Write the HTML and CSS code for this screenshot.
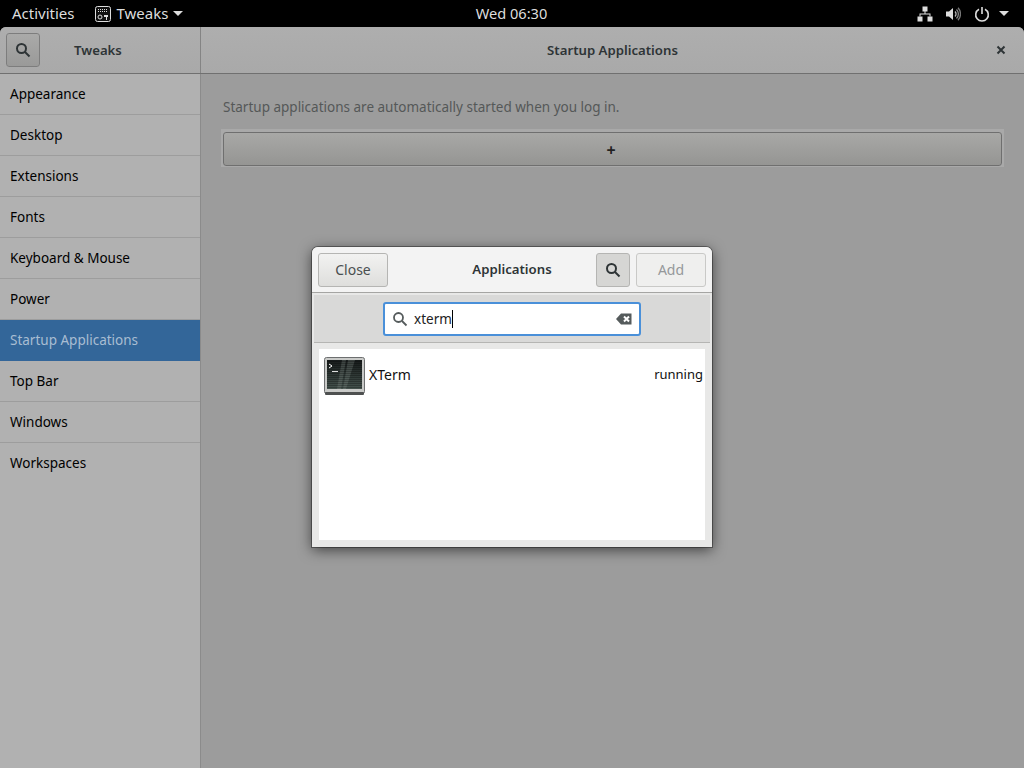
FILE: index.html
```html
<!DOCTYPE html>
<html lang="en">

<head>
    <meta charset="UTF-8">
    <title>Tweaks</title>
    <link rel="stylesheet" href="styles.css">
</head>

<body>
    <div class="topbar">
        <div class="topLeft">
            <span class="barText">Activities</span>
            <span class="appMenu">
                <svg width="16" height="16" viewBox="0 0 16 16">
                    <rect x="0.5" y="0.5" width="15" height="15" rx="2" fill="#111" stroke="#ddd"/>
                    <path d="M3 3h1v1H3zM5 3h1v1H5zM7 3h1v1H7zM9 3h1v1H9zM11 3h1v1h-1zM3 5h1v1H3zM5 5h1v1H5zM7 5h1v1H7zM9 5h1v1H9zM11 5h1v1h-1z" fill="#ddd"/>
                    <circle cx="5" cy="11" r="2" fill="none" stroke="#ddd"/>
                    <path d="M9 9h4v2h-1v3h-1v-3H9z" fill="#ddd"/>
                </svg>
                <span class="barText">Tweaks</span>
                <span class="arrow"></span>
            </span>
        </div>
        <div class="clock">Wed 06:30</div>
        <div class="tray">
            <svg width="16" height="16" viewBox="0 0 16 16" fill="#ddd">
                <rect x="5.500" y="0.500" width="5" height="5"/>
                <rect x="0.500" y="10.500" width="5" height="5"/>
                <rect x="10.500" y="10.500" width="5" height="5"/>
                <path d="M7.500 5h1v2.500H13.500v3h-1v-2H3.500v2h-1v-3H7.500z"/>
            </svg>
            <svg width="16" height="16" viewBox="0 0 16 16" fill="none">
                <path d="M1 5.500h3L8 2v12L4 10.500H1z" fill="#ddd"/>
                <path d="M10 5.500a3.500 3.500 0 0 1 0 5" stroke="#bbb" stroke-width="1.300"/>
                <path d="M11.500 3.500a6.300 6.300 0 0 1 0 9" stroke="#888" stroke-width="1.300"/>
                <path d="M13 1.800a9 9 0 0 1 0 12.400" stroke="#777" stroke-width="1.300"/>
            </svg>
            <svg class="power" width="16" height="16" viewBox="0 0 16 16" fill="none" stroke="#ddd" stroke-width="1.600">
                <path d="M5 3.200a6.300 6.300 0 1 0 6 0"/>
                <path d="M8 1v7"/>
            </svg>
            <span class="arrow"></span>
        </div>
    </div>

    <div class="window">
        <div class="titlebar">
            <div class="titleLeft">
                <button class="iconBtn">
                    <svg width="16" height="16" viewBox="0 0 16 16" fill="none" stroke="#2e3436" stroke-width="2">
                        <circle cx="6.500" cy="6.500" r="4.500"/>
                        <path d="M10 10l4.500 4.500"/>
                    </svg>
                </button>
                <span class="titleText">Tweaks</span>
            </div>
            <div class="titleRight">
                <span class="titleText">Startup Applications</span>
                <svg class="closeIcon" width="10" height="10" viewBox="0 0 10 10" stroke="#2e3436" stroke-width="2">
                    <path d="M1.500 1.500l7 7M8.500 1.500l-7 7"/>
                </svg>
            </div>
        </div>
        <div class="content">
            <div class="sidebar">
                <div class="item">Appearance</div>
                <div class="item">Desktop</div>
                <div class="item">Extensions</div>
                <div class="item">Fonts</div>
                <div class="item">Keyboard &amp; Mouse</div>
                <div class="item">Power</div>
                <div class="item selected">Startup Applications</div>
                <div class="item">Top Bar</div>
                <div class="item">Windows</div>
                <div class="item">Workspaces</div>
            </div>
            <div class="main">
                <p class="hint">Startup applications are automatically started when you log in.</p>
                <div class="addFrame">
                    <button class="addRow">+</button>
                </div>
            </div>
        </div>
    </div>

    <div class="dialog">
        <div class="dialogHeader">
            <button class="btn">Close</button>
            <span class="dialogTitle">Applications</span>
            <div class="dialogActions">
                <button class="iconBtn searchOn">
                    <svg width="16" height="16" viewBox="0 0 16 16" fill="none" stroke="#2e3436" stroke-width="2">
                        <circle cx="6.500" cy="6.500" r="4.500"/>
                        <path d="M10 10l4.500 4.500"/>
                    </svg>
                </button>
                <button class="btn addBtn">Add</button>
            </div>
        </div>
        <div class="dialogBody">
            <div class="searchBar">
                <div class="searchBox">
                    <svg width="16" height="16" viewBox="0 0 16 16" fill="none" stroke="#555b5c" stroke-width="1.800">
                        <circle cx="6.500" cy="6.500" r="4.500"/>
                        <path d="M10 10l4.500 4.500"/>
                    </svg>
                    <span class="query">xterm</span>
                    <span class="caret"></span>
                    <svg class="clearIcon" width="16" height="12" viewBox="0 0 16 12">
                        <path d="M5 0.500h10.500v11H5L0 6z" fill="#555b5c"/>
                        <path d="M8 3.500l5 5M13 3.500l-5 5" stroke="#fff" stroke-width="2"/>
                    </svg>
                </div>
            </div>
            <div class="results">
                <div class="result">
                    <svg class="termIcon" width="41" height="38" viewBox="0 0 41 38">
                        <defs>
                            <linearGradient id="screenGrad" x1="0" y1="0" x2="0" y2="1">
                                <stop offset="0" stop-color="#161a1a"/>
                                <stop offset="1" stop-color="#45534e"/>
                            </linearGradient>
                            <pattern id="scanlines" width="2" height="2" patternUnits="userSpaceOnUse">
                                <rect width="2" height="1" fill="#000" fill-opacity="0.25"/>
                            </pattern>
                        </defs>
                        <rect x="0.500" y="0.500" width="40" height="36" rx="2" fill="#c9cac8" stroke="#6d6f70"/>
                        <rect x="1" y="35" width="39" height="3" rx="1" fill="#4e5050"/>
                        <rect x="3" y="3" width="35" height="29" fill="url(#screenGrad)"/>
                        <path d="M18 3h4l-5 29h-4zM24 3h7l-9 29h-3z" fill="#7d8a85" fill-opacity="0.35"/>
                        <rect x="3" y="3" width="35" height="29" fill="url(#scanlines)"/>
                        <path d="M5 7l3 2-3 2" fill="none" stroke="#fff"/>
                        <path d="M8 14.500h6" stroke="#ddd"/>
                    </svg>
                    <span class="resultName">XTerm</span>
                    <span class="resultState">running</span>
                </div>
            </div>
        </div>
    </div>
</body>

</html>
```

FILE: styles.css
```css
* {
    margin: 0;
    padding: 0;
    box-sizing: border-box;
}

body {
    width: 1024px;
    height: 768px;
    overflow: hidden;
    background-color: #000;
    font-family: "Noto Sans", "Open Sans", sans-serif;
    font-size: 13.5px;
    position: relative;
}

button {
    font-family: inherit;
    font-size: 14px;
}

.topbar {
    height: 27px;
    background-color: #000;
    color: #ddd;
    display: grid;
    grid-template-columns: 1fr auto 1fr;
    align-items: center;
    padding: 0 15px 0 12px;
    font-size: 15px;
}

.topLeft {
    display: flex;
    align-items: center;
    gap: 20px;
}

.barText {
    padding-bottom: 2px;
}

.appMenu {
    display: flex;
    align-items: center;
    gap: 6px;
}

.arrow {
    width: 0;
    height: 0;
    border-left: 5px solid transparent;
    border-right: 5px solid transparent;
    border-top: 5px solid #ddd;
    margin-left: -1px;
}

.clock {
    text-align: center;
    font-size: 14.6px;
    padding: 0 0 2px 2px;
}

.tray {
    display: flex;
    align-items: center;
    justify-content: flex-end;
    gap: 12px;
}

.power {
    margin-left: 1px;
}

.tray .arrow {
    margin-left: -3px;
}

.window {
    height: 741px;
    border-radius: 6px 6px 0 0;
    background-color: #9c9c9c;
    overflow: hidden;
}

.titlebar {
    height: 47px;
    display: flex;
    background-image: linear-gradient(#aeaeae, #a9a9a9);
    border-bottom: 1px solid #707070;
}

.titleLeft {
    width: 201px;
    flex-shrink: 0;
    display: flex;
    align-items: center;
    padding-left: 6px;
    border-right: 1px solid #848484;
}

.titleLeft .titleText {
    margin-left: 34px;
}

.titleRight {
    flex: 1;
    display: flex;
    align-items: center;
    justify-content: center;
    position: relative;
}

.titleText {
    font-size: 13.2px;
    font-weight: 600;
    color: #2e3436;
    padding-bottom: 1px;
}

.closeIcon {
    position: absolute;
    right: 18px;
    top: 18px;
}

.iconBtn {
    width: 34px;
    height: 34px;
    border: 1px solid #7d7d7d;
    border-radius: 3px;
    background-image: linear-gradient(#aaaaa9, #9a9a99);
    display: flex;
    align-items: center;
    justify-content: center;
}

.content {
    display: flex;
    height: 694px;
}

.sidebar {
    width: 201px;
    flex-shrink: 0;
    background-color: #b1b1b1;
    border-right: 1px solid #8b8b8b;
}

.item {
    height: 41px;
    line-height: 40px;
    padding-left: 10px;
    color: #000;
    border-bottom: 1px solid #9d9d9d;
}

.item:last-child {
    border-bottom: none;
}

.item.selected {
    background-color: #336699;
    color: #a9bdd2;
    border-bottom-color: #336699;
}

.main {
    flex: 1;
    padding: 23px 20px 0 20px;
}

.hint {
    color: #555858;
    line-height: 20px;
    margin-bottom: 12px;
    padding-left: 2px;
}

.addFrame {
    height: 38px;
    padding: 3px 2px 1px;
    background-color: #a9a9a9;
}

.addRow {
    display: block;
    width: 100%;
    height: 34px;
    padding: 2px 3px 0 0;
    border: 1px solid #6f6f6f;
    border-radius: 3px;
    background-image: linear-gradient(#a8a8a6, #959593);
    color: #222;
    font-size: 16px;
    font-weight: bold;
}

.dialog {
    position: absolute;
    left: 312px;
    top: 247px;
    width: 400px;
    height: 300px;
    border-radius: 6px 6px 0 0;
    background-color: #e8e8e7;
    box-shadow: 0 0 0 1px rgba(0, 0, 0, 0.35), 0 3px 14px rgba(0, 0, 0, 0.6);
    overflow: hidden;
}

.dialogHeader {
    height: 46px;
    background-color: #f3f3f3;
    border-bottom: 1px solid #a5a5a3;
    display: flex;
    align-items: center;
    justify-content: space-between;
    padding: 0 6px;
    position: relative;
}

.dialogTitle {
    position: absolute;
    left: 0;
    right: 0;
    text-align: center;
    font-size: 13.2px;
    font-weight: 600;
    color: #2e3436;
    padding-bottom: 1px;
}

.dialogActions {
    display: flex;
    gap: 6px;
    position: relative;
}

.btn {
    width: 70px;
    height: 34px;
    border: 1px solid #b5b5b3;
    border-radius: 3px;
    background-image: linear-gradient(#f2f2f1, #dededc);
    color: #4a4f50;
}

.addBtn {
    background-image: none;
    background-color: #efefee;
    border-color: #c9c9c7;
    color: #95989a;
}

.iconBtn.searchOn {
    background-image: none;
    background-color: #d6d6d4;
    border-color: #b5b5b3;
}

.dialogBody {
    padding: 0 2px;
}

.searchBar {
    height: 48px;
    margin-top: 2px;
    background-color: #d9d9d8;
    border-bottom: 1px solid #b5b5b3;
    display: flex;
    justify-content: center;
    align-items: center;
}

.searchBox {
    width: 258px;
    height: 34px;
    background-color: #fff;
    border: 2px solid #4a90d9;
    border-radius: 3px;
    display: flex;
    align-items: center;
    padding: 0 7px;
    color: #222;
}

.query {
    margin-left: 6px;
}

.caret {
    width: 1px;
    height: 18px;
    background-color: #000;
}

.clearIcon {
    margin-left: auto;
}

.results {
    margin: 6px 5px 0;
    height: 191px;
    background-color: #fff;
}

.result {
    display: flex;
    align-items: center;
    height: 50px;
    padding: 0 2px 0 5px;
    color: #111;
}

.termIcon {
    flex-shrink: 0;
    margin-top: 3px;
}

.resultName {
    margin-left: 4px;
    font-size: 14px;
}

.resultState {
    margin-left: auto;
    font-size: 13px;
}
```
